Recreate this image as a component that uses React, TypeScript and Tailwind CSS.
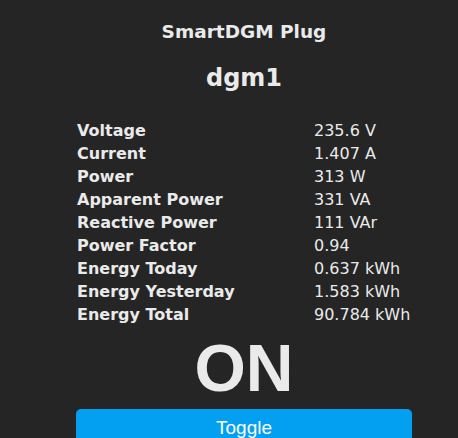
export default function App() {
  const rows: [string, string][] = [
    ["Voltage", "235.6 V"],
    ["Current", "1.407 A"],
    ["Power", "313 W"],
    ["Apparent Power", "331 VA"],
    ["Reactive Power", "111 VAr"],
    ["Power Factor", "0.94"],
    ["Energy Today", "0.637 kWh"],
    ["Energy Yesterday", "1.583 kWh"],
    ["Energy Total", "90.784 kWh"],
  ];

  return (
    <div className="h-[438px] w-full overflow-hidden bg-[#252525] text-[#eaeaea] font-['DejaVu_Sans',Verdana,sans-serif]">
      <div className="ml-[76px] w-[336px]">
        <h3 className="pt-[21px] text-center text-[18.5px] font-bold leading-[22px]">
          SmartDGM Plug
        </h3>
        <h2 className="mt-[20px] text-center text-[24px] font-bold leading-[30px]">
          dgm1
        </h2>

        <table className="mt-[26px] w-full border-collapse text-[16px]">
          <tbody>
            {rows.map(([label, value]) => (
              <tr key={label} className="h-[23px]">
                <th className="p-0 pl-[1px] text-left font-bold leading-[23px]">{label}</th>
                <td className="w-[98px] p-0 text-left leading-[23px]">{value}</td>
              </tr>
            ))}
          </tbody>
        </table>

        <div className="mt-[7px] text-center font-['Liberation_Sans',Arial,sans-serif] text-[66px] font-bold leading-[70px]">
          ON
        </div>

        <button className="mt-[6px] block h-[38px] w-full rounded-[5px] bg-[#03a0f2] font-['Liberation_Sans',Arial,sans-serif] text-[19px] leading-[38px] text-white">
          Toggle
        </button>
      </div>
    </div>
  );
}
